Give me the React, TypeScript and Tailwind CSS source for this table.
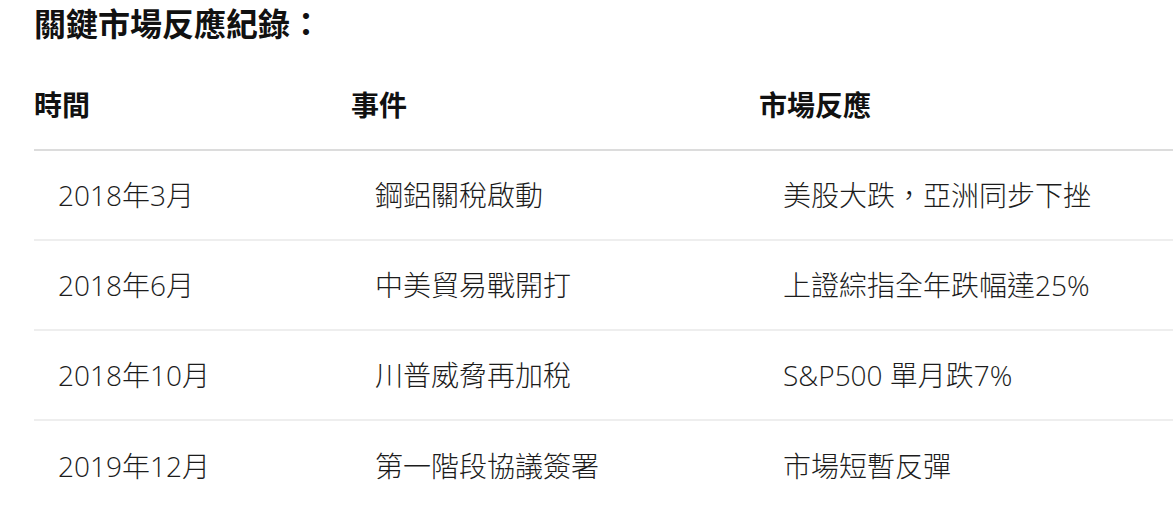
const rows = [
  { time: '2018年3月', event: '鋼鋁關稅啟動', reaction: '美股大跌，亞洲同步下挫' },
  { time: '2018年6月', event: '中美貿易戰開打', reaction: '上證綜指全年跌幅達25%' },
  { time: '2018年10月', event: '川普威脅再加稅', reaction: 'S&P500 單月跌7%' },
  { time: '2019年12月', event: '第一階段協議簽署', reaction: '市場短暫反彈' },
];

const font = { fontFamily: '"Open Sans", "Noto Sans CJK TC", sans-serif' };

export default function App() {
  return (
    <div lang="zh-TW" className="w-[1173px] h-[523px] bg-white overflow-hidden pl-[34px]" style={font}>
      {/* Title */}
      <h3 className="h-[48px] leading-[48px] text-[32px] font-bold text-[#111]">關鍵市場反應紀錄：</h3>

      {/* Table */}
      <div className="mt-[13px] w-[1200px]">
        <div className="grid grid-cols-[317px_408px_1fr] h-[90px] items-center border-b-2 border-[#dcdcdc] text-[28px] font-bold text-[#111]">
          <div>時間</div>
          <div>事件</div>
          <div>市場反應</div>
        </div>
        {rows.map((r, i) => (
          <div
            key={r.time}
            className={
              'grid grid-cols-[317px_408px_1fr] h-[90px] items-center text-[28px] font-light text-[#1c1c1c] ' +
              (i < rows.length - 1 ? 'border-b-2 border-[#eeeeee]' : '')
            }
          >
            <div className="pl-[24px]">{r.time}</div>
            <div className="pl-[24px]">{r.event}</div>
            <div className="pl-[24px]">{r.reaction}</div>
          </div>
        ))}
      </div>
    </div>
  );
}
